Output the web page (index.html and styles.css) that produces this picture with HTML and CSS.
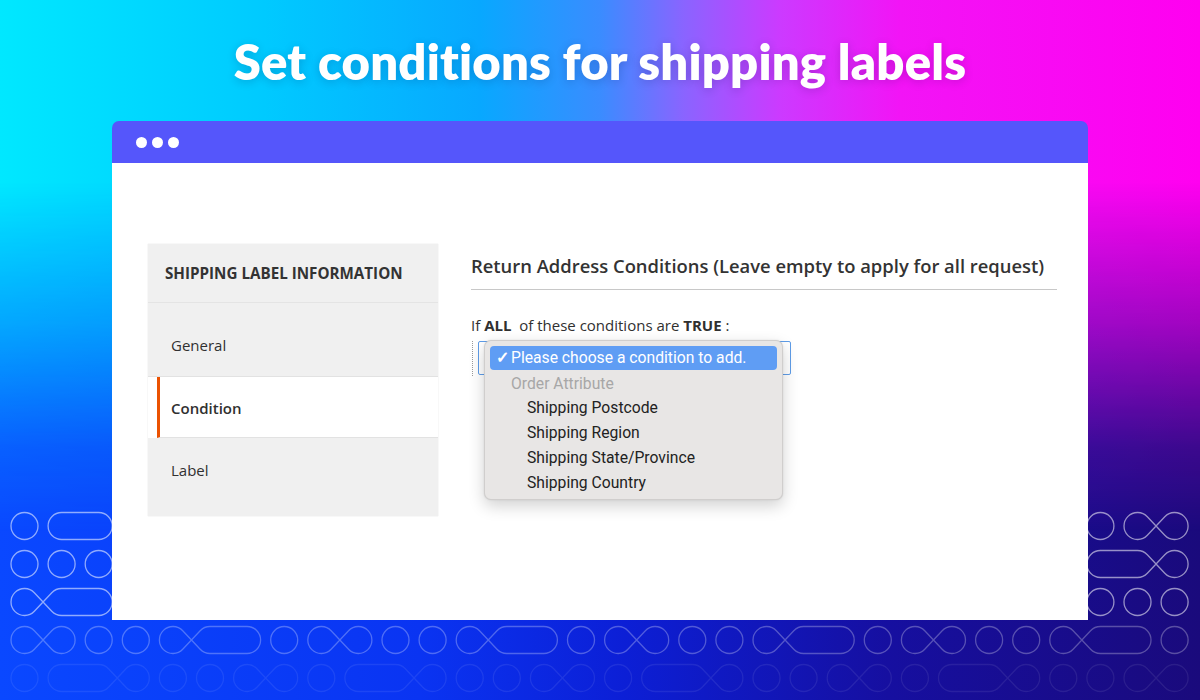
FILE: index.html
```html
<!DOCTYPE html>
<html lang="en">
<head>
<meta charset="utf-8">
<title>Set conditions for shipping labels</title>
<link rel="stylesheet" href="styles.css">
</head>
<body>
<div class="stage">
  <svg class="pattern" width="1200" height="700" viewBox="0 0 1200 700" aria-hidden="true">
    <defs>
      <circle id="c" cx="0" cy="0" r="13.5"/>
      <rect id="p2" x="-13.5" y="-13.5" width="64.1" height="27" rx="13.5"/>
      <path id="inf" d="M18.55,0 L9.83,-9.26 A13.5,13.5 0 1 0 9.83,9.26 L27.27,-9.26 A13.5,13.5 0 1 1 27.27,9.26 Z"/>
      <path id="cp" d="M18.55,0 L9.83,-9.26 A13.5,13.5 0 1 0 9.83,9.26 L27.27,-9.26 A13.5,13.5 0 0 1 37.1,-13.5 L74.2,-13.5 A13.5,13.5 0 0 1 74.2,13.5 L37.1,13.5 A13.5,13.5 0 0 1 27.27,9.26 Z"/>
      <path id="pc" d="M55.65,0 L64.37,-9.26 A13.5,13.5 0 1 1 64.37,9.26 L46.93,-9.26 A13.5,13.5 0 0 0 37.1,-13.5 L0,-13.5 A13.5,13.5 0 0 0 0,13.5 L37.1,13.5 A13.5,13.5 0 0 0 46.93,9.26 Z"/>
    </defs>
    <g class="row-a">
      <use href="#c" x="24.5" y="526"/>
      <use href="#p2" x="61.6" y="526"/>
      <use href="#c" x="1100.4" y="526"/>
      <use href="#inf" x="1137.5" y="526"/>

      <use href="#c" x="24.5" y="564"/>
      <use href="#c" x="61.6" y="564"/>
      <use href="#c" x="98.7" y="564"/>
      <use href="#pc" x="1100.4" y="564"/>

      <use href="#cp" x="24.5" y="602"/>
      <use href="#c" x="1100.4" y="602"/>
      <use href="#c" x="1137.5" y="602"/>
      <use href="#c" x="1174.6" y="602"/>
    </g>
    <g class="row-b">
      <use href="#inf" x="24.5" y="640"/>
      <use href="#c" x="98.7" y="640"/>
      <use href="#c" x="135.8" y="640"/>
      <use href="#cp" x="172.9" y="640"/>
      <use href="#c" x="284.2" y="640"/>
      <use href="#inf" x="321.3" y="640"/>
      <use href="#c" x="395.5" y="640"/>
      <use href="#c" x="432.6" y="640"/>
      <use href="#cp" x="469.7" y="640"/>
      <use href="#c" x="581.0" y="640"/>
      <use href="#inf" x="618.1" y="640"/>
      <use href="#c" x="692.3" y="640"/>
      <use href="#c" x="729.4" y="640"/>
      <use href="#cp" x="766.5" y="640"/>
      <use href="#c" x="877.8" y="640"/>
      <use href="#inf" x="914.9" y="640"/>
      <use href="#c" x="989.1" y="640"/>
      <use href="#c" x="1026.2" y="640"/>
      <use href="#cp" x="1063.3" y="640"/>
      <use href="#c" x="1174.6" y="640"/>
    </g>
    <g class="row-c">
      <use href="#c" x="24.5" y="678"/>
      <use href="#pc" x="61.6" y="678"/>
      <use href="#c" x="172.9" y="678"/>
      <use href="#c" x="210.0" y="678"/>
      <use href="#inf" x="247.1" y="678"/>
      <use href="#c" x="321.3" y="678"/>
      <use href="#pc" x="358.4" y="678"/>
      <use href="#c" x="469.7" y="678"/>
      <use href="#c" x="506.8" y="678"/>
      <use href="#inf" x="543.9" y="678"/>
      <use href="#c" x="618.1" y="678"/>
      <use href="#pc" x="655.2" y="678"/>
      <use href="#c" x="766.5" y="678"/>
      <use href="#c" x="803.6" y="678"/>
      <use href="#inf" x="840.7" y="678"/>
      <use href="#c" x="914.9" y="678"/>
      <use href="#pc" x="952.0" y="678"/>
      <use href="#c" x="1063.3" y="678"/>
      <use href="#c" x="1100.4" y="678"/>
      <use href="#inf" x="1137.5" y="678"/>
    </g>
  </svg>

  <h1 class="title">Set conditions for shipping labels</h1>

  <div class="window">
    <div class="win-bar">
      <span class="dot"></span><span class="dot"></span><span class="dot"></span>
    </div>
    <div class="win-body">
      <nav class="tabs">
        <div class="tabs-head">SHIPPING LABEL INFORMATION</div>
        <div class="tab tab-general">General</div>
        <div class="tab tab-active">Condition</div>
        <div class="tab tab-label">Label</div>
      </nav>
      <section class="conditions">
        <h2 class="cond-title">Return Address Conditions (Leave empty to apply for all request)</h2>
        <p class="rule">If <b>ALL</b>&nbsp; of these conditions are <b>TRUE</b> :</p>
        <div class="select-row">
          <div class="select-box"></div>
          <ul class="menu">
            <li class="opt opt-selected"><span class="check">✓</span>Please choose a condition to add.</li>
            <li class="opt opt-group">Order Attribute</li>
            <li class="opt opt-child">Shipping Postcode</li>
            <li class="opt opt-child">Shipping Region</li>
            <li class="opt opt-child">Shipping State/Province</li>
            <li class="opt opt-child">Shipping Country</li>
          </ul>
        </div>
      </section>
    </div>
  </div>
</div>
</body>
</html>
```

FILE: styles.css
```css
* { box-sizing: border-box; }

html, body {
  margin: 0;
  padding: 0;
}

body {
  width: 1200px;
  height: 700px;
  overflow: hidden;
  font-family: "Open Sans", "Liberation Sans", sans-serif;
}

.stage {
  position: relative;
  width: 1200px;
  height: 700px;
  overflow: hidden;
  padding-top: 33px;
  background: linear-gradient(90deg, #0a48ff 0%, #0a34f2 35%, #0c1fd6 52%, #160fa0 74%, #1a0a7c 100%);
}

.stage::before {
  content: "";
  position: absolute;
  inset: 0;
  background: linear-gradient(90deg, #00e8ff 0%, #00caff 22%, #08a8ff 40%, #3a8cff 50%, #8a64ff 57%, #cc3aff 65%, #f214f6 75%, #ff00f0 100%);
  -webkit-mask-image: linear-gradient(180deg, #000 0%, #000 26%, rgba(0,0,0,0.6) 46%, rgba(0,0,0,0.15) 64%, rgba(0,0,0,0) 76%);
  mask-image: linear-gradient(180deg, #000 0%, #000 26%, rgba(0,0,0,0.6) 46%, rgba(0,0,0,0.15) 64%, rgba(0,0,0,0) 76%);
}

.pattern {
  position: absolute;
  left: 0;
  top: 0;
  fill: none;
  stroke: #ffffff;
  stroke-width: 1.3;
}

.row-a { stroke-opacity: 0.55; }
.row-b { stroke-opacity: 0.28; }
.row-c { stroke-opacity: 0.08; }

.title {
  position: relative;
  margin: 0 0 31px;
  height: 57px;
  line-height: 57px;
  text-align: center;
  color: #ffffff;
  font-family: "Lato", "Open Sans", sans-serif;
  font-weight: 800;
  font-size: 49px;
  letter-spacing: 0.2px;
  text-shadow: 0 2px 10px rgba(0, 0, 60, 0.18);
}

.window {
  position: relative;
  margin-left: 112px;
  width: 976px;
}

.win-bar {
  height: 42px;
  background: #5556fb;
  border-radius: 7px 7px 0 0;
  display: flex;
  align-items: center;
  gap: 5px;
  padding-left: 24px;
}

.dot {
  width: 11px;
  height: 11px;
  border-radius: 50%;
  background: #ffffff;
}

.win-body {
  height: 457px;
  background: #ffffff;
  display: flex;
  gap: 33px;
  padding: 81px 0 0 36px;
}

.tabs {
  width: 290px;
  align-self: flex-start;
  color: #303030;
  font-size: 15px;
  box-shadow: 0 0 1px rgba(0, 0, 0, 0.18);
}

.tabs-head {
  height: 59px;
  background: #f0f0f0;
  border-bottom: 1px solid #e4e4e4;
  padding: 19px 0 0 17px;
  font-weight: 700;
  font-size: 15.2px;
  line-height: 20px;
  color: #333333;
}

.tab {
  background: #f0f0f0;
  line-height: 20px;
  padding-left: 23px;
  border-bottom: 1px solid #e2e2e2;
}

.tab-general {
  height: 74px;
  padding-top: 32px;
}

.tab-active {
  height: 61px;
  padding-top: 21px;
  margin-left: 9px;
  padding-left: 11px;
  background: #ffffff;
  border-left: 3px solid #eb5202;
  border-bottom: 1px solid #e2e2e2;
  font-weight: 600;
}

.tab-label {
  height: 78px;
  padding-top: 22px;
  border-bottom: none;
}

.conditions {
  width: 586px;
  padding-top: 10px;
}

.cond-title {
  margin: 0;
  font-size: 18.4px;
  font-weight: 600;
  line-height: 24px;
  color: #333333;
  padding-bottom: 11px;
  border-bottom: 1px solid #c8c8c8;
}

.rule {
  margin: 25px 0 0;
  font-size: 15px;
  line-height: 20px;
  color: #303030;
}

.rule b { font-weight: 700; }

.select-row {
  position: relative;
  margin-top: 6px;
  margin-left: 1px;
  height: 35px;
  border-left: 1px dotted #9a9a9a;
  padding-left: 5px;
}

.select-box {
  width: 313px;
  height: 34px;
  border: 1px solid #5f9de8;
  border-radius: 2px;
  background: #ffffff;
}

.menu {
  position: absolute;
  left: 11px;
  top: -1px;
  width: 299px;
  height: 160px;
  margin: 0;
  padding: 5px;
  list-style: none;
  background: #e8e6e5;
  border: 1px solid rgba(0, 0, 0, 0.1);
  border-radius: 7px;
  box-shadow: 0 6px 16px rgba(0, 0, 0, 0.18), 0 0 2px rgba(0, 0, 0, 0.1);
  font-family: "Roboto", "Liberation Sans", sans-serif;
  font-size: 15.7px;
  color: #222222;
}

.opt {
  height: 24.8px;
  line-height: 24.8px;
  padding-left: 21px;
  white-space: nowrap;
}

.opt-selected {
  position: relative;
  height: 24px;
  line-height: 24px;
  margin-bottom: 1.5px;
  background: #5f9df4;
  color: #ffffff;
  border-radius: 4px;
}

.check {
  position: absolute;
  left: 6px;
  top: 0;
  font-weight: 700;
}

.opt-group {
  color: #a7a7a7;
}

.opt-child {
  padding-left: 37px;
}
```
